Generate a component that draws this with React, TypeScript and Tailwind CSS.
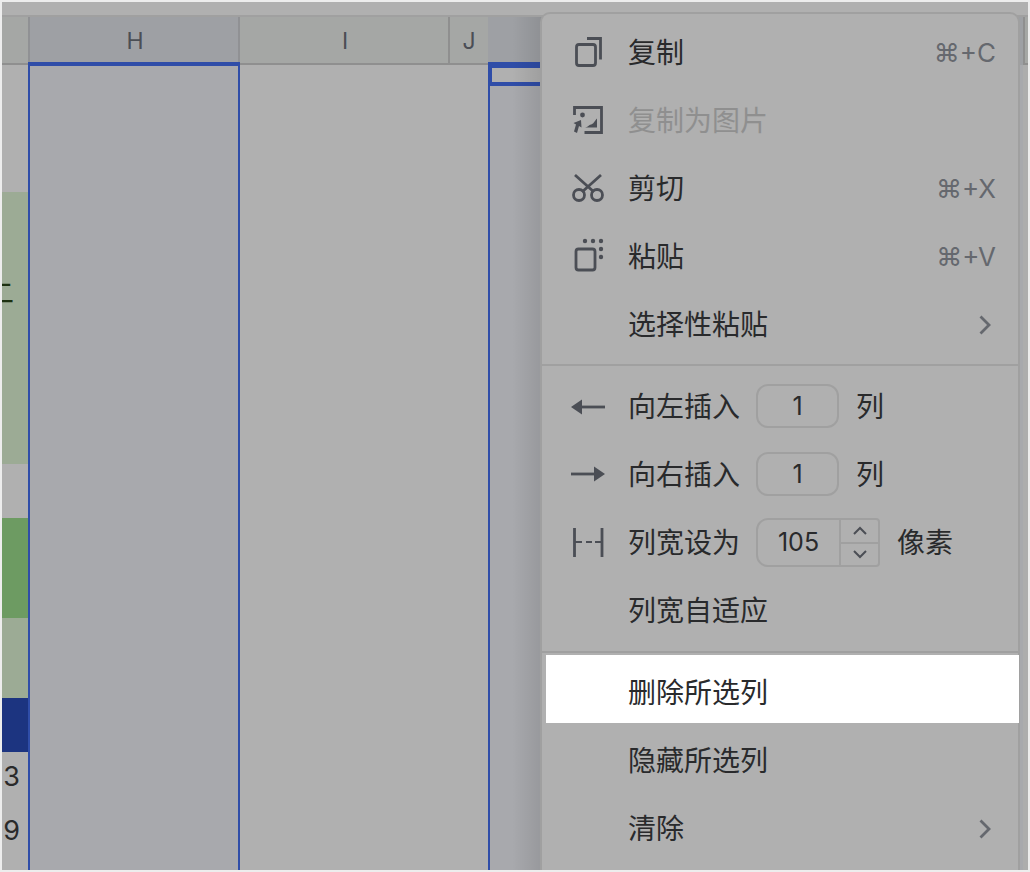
import type { ReactNode } from 'react'

const iconProps = {
  width: 87,
  height: 68,
  fill: 'none',
  stroke: 'currentColor',
  strokeWidth: 2.8,
}

function CopyIcon() {
  return (
    <svg {...iconProps} viewBox="542 19 87 68">
      <rect x="576.500" y="44.500" width="19" height="21" rx="2.500" />
      <path d="M587 38.500h13.500v21" />
    </svg>
  )
}

function ImageIcon() {
  return (
    <svg {...iconProps} viewBox="542 87 87 68">
      <path d="M574.500 115v-7.500h27v25h-17" />
      <circle cx="582.500" cy="115" r="2.400" fill="currentColor" stroke="none" />
      <path d="M585 127.500c3 0 4-3 6-3 2 0 4-4 6-6v9z" fill="currentColor" stroke="none" />
      <path d="M581 120l-7.500 3 2.500 1.500-2 7 3 1.500 2-7 2.500 1.500z" fill="currentColor" stroke="none" />
    </svg>
  )
}

function ScissorsIcon() {
  return (
    <svg {...iconProps} viewBox="542 155 87 68">
      <path d="M575 175l19 17M601 175l-19 17" />
      <circle cx="579" cy="195" r="5.500" />
      <circle cx="597" cy="195" r="5.500" />
    </svg>
  )
}

function PasteIcon() {
  return (
    <svg {...iconProps} viewBox="542 223 87 68">
      <rect x="576" y="249" width="19" height="21" rx="2.500" />
      <g fill="currentColor" stroke="none">
        <circle cx="585" cy="241" r="2.200" />
        <circle cx="593" cy="241" r="2.200" />
        <circle cx="601" cy="241" r="2.200" />
        <circle cx="601" cy="249" r="2.200" />
        <circle cx="601" cy="257" r="2.200" />
      </g>
    </svg>
  )
}

function LeftIcon() {
  return (
    <svg {...iconProps} viewBox="542 373 87 68">
      <path d="M581 407h24" />
      <path d="M571 407l11-7.500v15z" fill="currentColor" stroke="none" />
    </svg>
  )
}

function RightIcon() {
  return (
    <svg {...iconProps} viewBox="542 441 87 68">
      <path d="M571 474h24" />
      <path d="M605 474l-11-7.500v15z" fill="currentColor" stroke="none" />
    </svg>
  )
}

function WidthIcon() {
  return (
    <svg {...iconProps} viewBox="542 509 87 68">
      <path d="M574.500 528v29M602 528v29" />
      <path d="M575 542h7M586 542h6M595 542h7" strokeWidth="2.200" />
    </svg>
  )
}

function Chevron() {
  return (
    <svg width="12" height="20" viewBox="0 0 12 20" fill="none" stroke="currentColor" strokeWidth="2.800" className="mr-[5px] text-[#65686e]">
      <path d="M1.500 1.500l8.500 8.500-8.500 8.500" />
    </svg>
  )
}

function Row({ icon, children, right, muted, hover, low }: {
  icon?: ReactNode
  children: ReactNode
  right?: ReactNode
  muted?: boolean
  hover?: boolean
  low?: boolean
}) {
  return (
    <div
      className={`flex h-[68px] items-center pr-[22px] ${low ? 'pt-2' : ''} ${hover ? '-mr-[1px] ml-[4px] bg-white' : ''} ${muted ? 'text-[#8f8f8f]' : 'text-[#292a2c]'}`}
    >
      <div className={`h-[68px] shrink-0 text-[#4b4e55] ${hover ? 'w-[82px]' : 'w-[86px]'} ${low ? '-mt-2' : ''}`}>{icon}</div>
      <div className="flex flex-1 items-center">{children}</div>
      {right}
    </div>
  )
}

function Shortcut({ children }: { children: ReactNode }) {
  return <span className="text-[26px] text-[#65686e]">{children}</span>
}

function NumberBox({ value }: { value: string }) {
  return (
    <div className="-mt-[2px] ml-[16px] mr-[17px] flex h-[44px] w-[83px] items-center justify-center rounded-[12px] border-2 border-[#a0a0a0] text-[25px]">
      {value}
    </div>
  )
}

function Stepper() {
  return (
    <div className="-mt-[1px] ml-[16px] mr-[17px] flex h-[49px] w-[124px] items-center rounded-l-[12px] rounded-r-[4px] border-2 border-[#a0a0a0] text-[25px]">
      <div className="flex h-full w-[81px] items-center justify-center">105</div>
      <div className="flex h-full flex-1 flex-col border-l-2 border-[#a0a0a0] text-[#4b4e55]">
        <div className="flex flex-1 items-center justify-center border-b-2 border-[#a0a0a0]">
          <svg width="16" height="10" viewBox="0 0 16 10" fill="none" stroke="currentColor" strokeWidth="2"><path d="M2 8l6-6 6 6" /></svg>
        </div>
        <div className="flex flex-1 items-center justify-center">
          <svg width="16" height="10" viewBox="0 0 16 10" fill="none" stroke="currentColor" strokeWidth="2"><path d="M2 2l6 6 6-6" /></svg>
        </div>
      </div>
    </div>
  )
}

function LeftCells() {
  return (
    <div className="flex flex-1 flex-col text-[27px] text-[#2a2a2a]">
      <div className="h-[127px] bg-[#b0b0b0]" />
      <div className="relative h-[272px] overflow-hidden bg-[#9cab95]">
        <span className="absolute right-[14px] top-[82px] text-[#1c3010]">二</span>
      </div>
      <div className="h-[54px] bg-[#b0b0b0]" />
      <div className="h-[100px] bg-[#6d9b62]" />
      <div className="h-[80px] bg-[#9cab95]" />
      <div className="h-[54px] bg-[#1c3480]" />
      <div className="flex h-[54px] items-center justify-end overflow-hidden bg-[#b0b0b0] pb-[4px] pr-[8px]">3</div>
      <div className="flex h-[54px] items-center justify-end overflow-hidden bg-[#b0b0b0] pb-[4px] pr-[8px]">9</div>
      <div className="flex-1 bg-[#b0b0b0]" />
    </div>
  )
}

export default function App() {
  return (
    <div className="relative h-[872px] w-[1030px] overflow-hidden bg-[#ededed] px-[2px] pb-[2px] pt-[2px] font-['Inter','Noto_Sans_CJK_SC',sans-serif]">
      <div className="flex h-full flex-col bg-[#b0b0b0]">
        <div className="h-[15px] shrink-0 border-b-2 border-[#a0a0a0] bg-[#b0b0b0]" />
        <div className="flex min-h-0 flex-1">
          {/* row header strip */}
          <div className="flex w-[26px] shrink-0 flex-col">
            <div className="h-[48px] shrink-0 border-b-2 border-[#8f8f8f] bg-[#a5a7a5]" />
            <LeftCells />
          </div>

          {/* H, selected */}
          <div className="flex w-[212px] shrink-0 flex-col">
            <div className="flex h-[45px] shrink-0 items-center justify-center border-x-2 border-[#909194] bg-[#9ea0a4] pl-[2px] pt-[3px] text-[23px] text-[#4b4e55]">H</div>
            <div className="flex-1 border-x-2 border-t-4 border-[#2f4da8] bg-[#a8a9ad]" />
          </div>

          {/* I */}
          <div className="flex w-[210px] shrink-0 flex-col">
            <div className="flex h-[48px] shrink-0 items-center justify-center border-b-2 border-r-2 border-[#8f8f8f] bg-[#a5a7a5] pl-[2px] pt-[2px] text-[23px] text-[#4b4e55]">I</div>
            <div className="flex-1 bg-[#b0b0b0]" />
          </div>

          {/* J */}
          <div className="flex w-[38px] shrink-0 flex-col">
            <div className="flex h-[48px] shrink-0 items-center justify-center border-b-2 border-[#8f8f8f] bg-[#a5a7a5] pt-[2px] text-[23px] text-[#4b4e55]">J</div>
            <div className="flex-1 bg-[#b0b0b0]" />
          </div>

          {/* K, selected with the active cell */}
          <div className="flex w-[52px] shrink-0 flex-col">
            <div className="h-[45px] shrink-0 bg-[#9ea0a4]" />
            <div className="flex-1 border-l-2 border-t-[6px] border-[#2f4da8] bg-[#a8a9ad]">
              <div className="h-[18px] border-b-4 border-l-2 border-[#2f4da8] bg-[#b0b0b0]" />
            </div>
          </div>
          <div className="flex w-[483px] shrink-0 flex-col">
            <div className="h-[48px] shrink-0 bg-[#9ea0a4]" />
            <div className="flex-1 bg-[#a8a9ad]" />
          </div>

          {/* L */}
          <div className="flex flex-1 flex-col">
            <div className="h-[48px] shrink-0 border-b-2 border-l-2 border-[#8f8f8f] bg-[#a5a7a5]" />
            <div className="flex-1 bg-[#adadad]" />
          </div>
        </div>
      </div>

      {/* shadow cast by the menu */}
      <div className="absolute bottom-[2px] left-[512px] top-[17px] w-[30px] bg-linear-to-r from-transparent to-black/10" />

      <div className="absolute bottom-[2px] left-[540px] top-[12px] w-[480px] rounded-t-[10px] border-x-2 border-t-2 border-[#a0a0a0] bg-[#b0b0b0] text-[28px] leading-none">
        <div className="pt-[5px]">
          <Row icon={<CopyIcon />} right={<Shortcut>⌘+C</Shortcut>}>复制</Row>
          <Row icon={<ImageIcon />} muted>复制为图片</Row>
          <Row icon={<ScissorsIcon />} right={<Shortcut>⌘+X</Shortcut>}>剪切</Row>
          <Row icon={<PasteIcon />} right={<Shortcut>⌘+V</Shortcut>}>粘贴</Row>
          <Row right={<Chevron />}>选择性粘贴</Row>
        </div>
        <div className="mt-[5px] h-[2px] bg-[#a0a0a0]" />
        <div className="pt-[7px]">
          <Row icon={<LeftIcon />}>向左插入<NumberBox value="1" />列</Row>
          <Row icon={<RightIcon />}>向右插入<NumberBox value="1" />列</Row>
          <Row icon={<WidthIcon />}>列宽设为<Stepper />像素</Row>
          <Row>列宽自适应</Row>
        </div>
        <div className="mt-[6px] h-[2px] bg-[#a0a0a0]" />
        <div className="pt-[2px]">
          <Row hover low>删除所选列</Row>
          <Row low>隐藏所选列</Row>
          <Row low right={<Chevron />}>清除</Row>
        </div>
      </div>
    </div>
  )
}
